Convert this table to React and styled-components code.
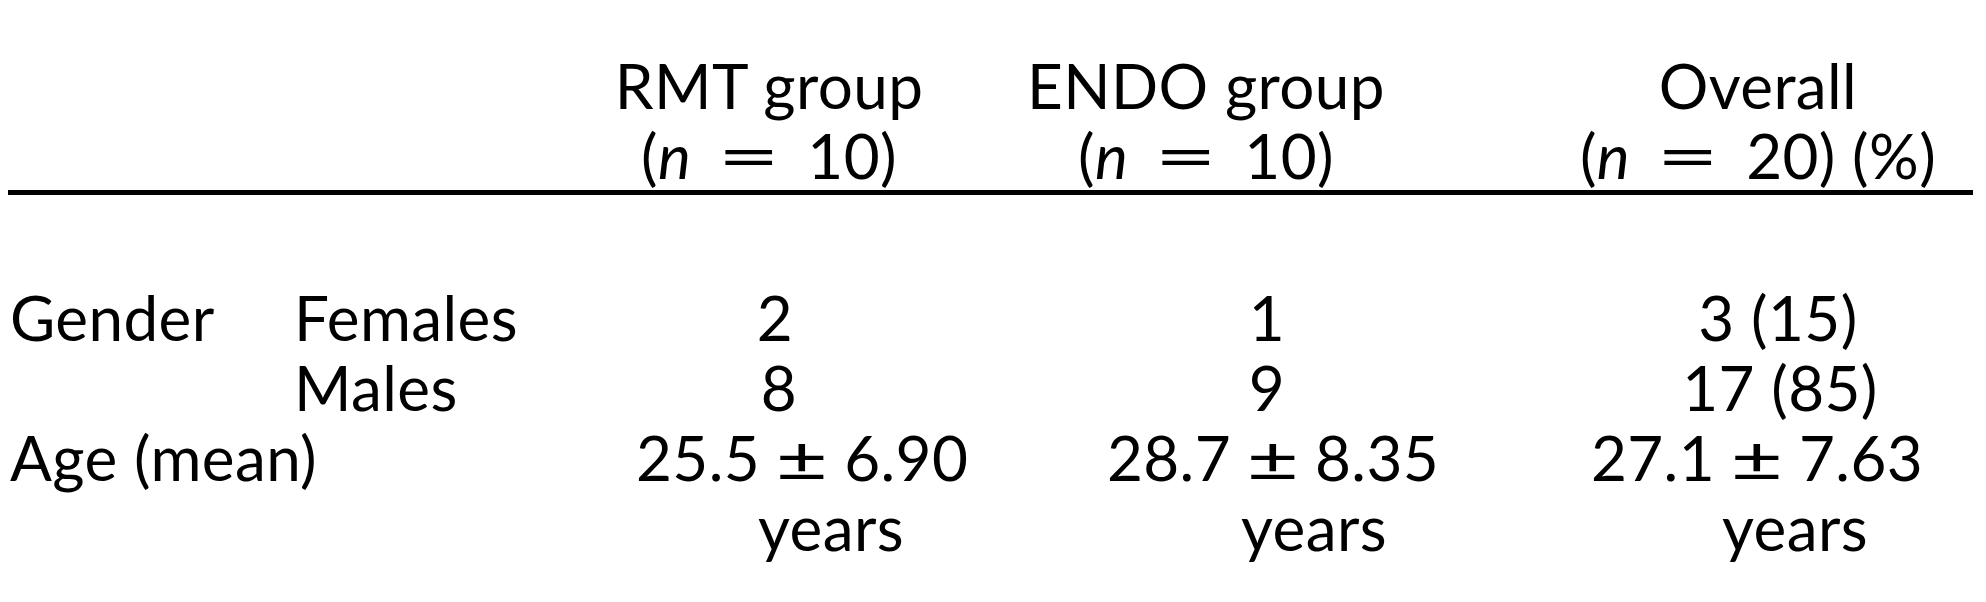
import React from 'react';
import styled, { createGlobalStyle } from 'styled-components';

const GlobalStyle = createGlobalStyle`
  html, body {
    margin: 0;
    padding: 0;
    background: #fff;
  }
  body {
    font-family: Lato, "Liberation Sans", sans-serif;
    color: #000;
  }
`;

const Page = styled.div`
  width: 1986px;
  height: 602px;
  overflow: hidden;
  padding-top: 50px;
  box-sizing: border-box;
`;

const Table = styled.div`
  display: grid;
  grid-template-columns: 284px 284px 382px 492px 524px;
  padding-left: 10px;
  font-size: 62px;
  line-height: 70px;
  letter-spacing: 0.4px;
`;

const Cell = styled.div`
  grid-column: ${p => p.$span || 'auto'};
  text-align: ${p => p.$align || 'center'};
  white-space: nowrap;
`;

// one line of a centred cell, nudged right (+) or left (-) by $shift px
const Line = styled.div`
  padding-left: ${p => Math.max(0, (p.$shift || 0) * 2)}px;
  padding-right: ${p => Math.max(0, -(p.$shift || 0) * 2)}px;
`;

const Rule = styled.div`
  grid-column: 1 / -1;
  height: 5px;
  background: #000;
  margin: 0 3px 87px -2px;
`;

const N = styled.i`
  font-style: italic;
`;

// math operators (= and ±) set wider, like the typeset table
const Op = styled.span`
  display: inline-block;
  width: ${p => p.$w}px;
  margin: 0 ${p => p.$gap}px;
  text-align: center;
  transform: scaleX(${p => p.$scale});
`;

const Header = ({ title, n, suffix, shift }) => (
  <Cell>
    <Line $shift={shift}>{title}</Line>
    <Line $shift={shift}>
      (<N>n</N><Op $w={60} $gap={28} $scale={1.75}>=</Op>{n}){suffix}
    </Line>
  </Cell>
);

const Value = ({ children, shift }) => (
  <Cell>
    <Line $shift={shift}>{children}</Line>
  </Cell>
);

const Age = ({ mean, sd, shift, yearsShift }) => (
  <Cell>
    <Line $shift={shift}>
      {mean}<Op $w={50} $gap={17} $scale={1.45}>±</Op>{sd}
    </Line>
    <Line $shift={yearsShift}>years</Line>
  </Cell>
);

export default function App() {
  return (
    <>
      <GlobalStyle />
      <Page>
        <Table>
          <Cell $span="1 / 3" />
          <Header title="RMT group" n="10" shift={0} />
          <Header title="ENDO group" n="10" shift={0} />
          <Header title="Overall" n="20" suffix=" (%)" shift={44} />

          <Rule />

          <Cell $align="left">Gender</Cell>
          <Cell $align="left">Females</Cell>
          <Value shift={6}>2</Value>
          <Value shift={61}>1</Value>
          <Value shift={64}>3 (15)</Value>

          <Cell />
          <Cell $align="left">Males</Cell>
          <Value shift={10}>8</Value>
          <Value shift={61}>9</Value>
          <Value shift={66}>17 (85)</Value>

          <Cell $span="1 / 3" $align="left">Age (mean)</Cell>
          <Age mean="25.5" sd="6.90" shift={29} yearsShift={62} />
          <Age mean="28.7" sd="8.35" shift={67} yearsShift={108} />
          <Age mean="27.1" sd="7.63" shift={43} yearsShift={81} />
        </Table>
      </Page>
    </>
  );
}
